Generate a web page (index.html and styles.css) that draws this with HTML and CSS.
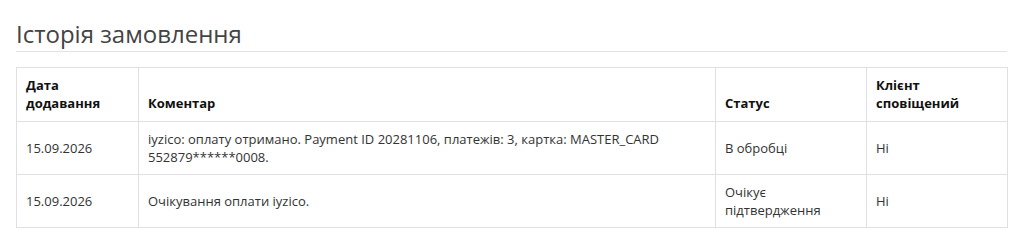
FILE: index.html
```html
<!DOCTYPE html>
<html lang="uk">
<head>
    <meta charset="UTF-8">
    <meta name="viewport" content="width=device-width, initial-scale=1.0">
    <title>Історія замовлення</title>
    <link rel="stylesheet" href="styles.css">
</head>
<body>
    <main class="order-history">
        <h2>Історія замовлення</h2>

        <!-- History table -->
        <table class="history-table">
            <colgroup>
                <col class="col-date">
                <col class="col-comment">
                <col class="col-status">
                <col class="col-notify">
            </colgroup>
            <thead>
                <tr>
                    <th>Дата додавання</th>
                    <th>Коментар</th>
                    <th>Статус</th>
                    <th>Клієнт сповіщений</th>
                </tr>
            </thead>
            <tbody>
                <tr>
                    <td>15.09.2026</td>
                    <td>iyzico: оплату отримано. Payment ID 20281106, платежів: 3, картка: MASTER_CARD 552879******0008.</td>
                    <td>В обробці</td>
                    <td>Ні</td>
                </tr>
                <tr>
                    <td>15.09.2026</td>
                    <td>Очікування оплати iyzico.</td>
                    <td>Очікує підтвердження</td>
                    <td>Ні</td>
                </tr>
            </tbody>
        </table>
    </main>
</body>
</html>
```

FILE: styles.css
```css
/* Global Styles */
body {
    font-family: 'Open Sans', 'Liberation Sans', sans-serif;
    font-size: 13px;
    line-height: 18px;
    margin: 0;
    padding: 0;
    background-color: #fff;
    color: #333;
}

/* Page */
.order-history {
    padding: 0 16px;
}

.order-history h2 {
    font-size: 24px;
    font-weight: 400;
    line-height: 28px;
    color: #444;
    margin: 20px 0 15px;
    padding-bottom: 3px;
    border-bottom: 1px solid #e2e2e6;
}

/* History table */
.history-table {
    width: 100%;
    table-layout: fixed;
    border-collapse: collapse;
}

.history-table .col-date { width: 122px; }
.history-table .col-comment { width: 577px; }
.history-table .col-status { width: 151px; }
.history-table .col-notify { width: 141px; }

.history-table th,
.history-table td {
    border: 1px solid #e0e0e4;
    padding: 8px 9px;
    text-align: left;
}

.history-table th {
    font-weight: bold;
    color: #111;
    vertical-align: bottom;
    padding-bottom: 9px;
}

.history-table td {
    vertical-align: middle;
}
```
